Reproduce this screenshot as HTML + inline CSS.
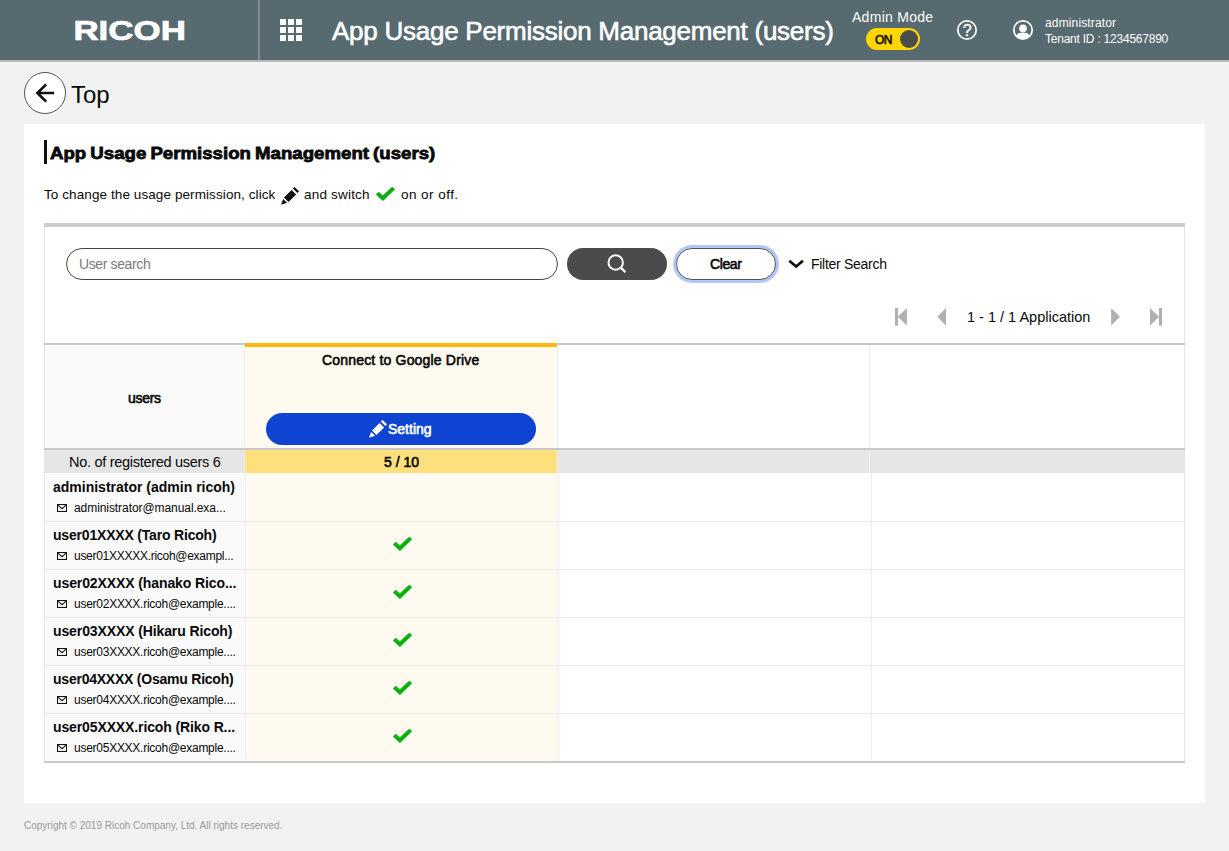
<!DOCTYPE html>
<html lang="en">
<head>
<meta charset="utf-8">
<title>App Usage Permission Management (users)</title>
<style>
*{box-sizing:border-box;margin:0;padding:0}
html,body{width:1229px;height:851px;overflow:hidden;background:#f2f2f2}
body{position:relative;font-family:"Liberation Sans",sans-serif;color:#080808;font-size:14px}
.abs{position:absolute}
.t{position:absolute;white-space:nowrap;line-height:1;transform-origin:0 50%}
.b{font-weight:bold}
.sb{font-weight:normal;-webkit-text-stroke:0.6px currentColor}
/* header */
#hdr{position:absolute;left:0;top:0;width:1229px;height:62px;background:#566a70;border-bottom:2px solid #b9b9b9;color:#fff}
#hdr .div{position:absolute;left:258px;top:0;width:2px;height:60px;background:#898989}
#grid{position:absolute;left:280px;top:19px;width:22px;height:22px}
#toggle{position:absolute;left:866px;top:28px;width:54px;height:22px;border-radius:11px;background:#ffd600}
#toggle .knob{position:absolute;left:34px;top:2px;width:18px;height:18px;border-radius:50%;background:#4b4c4e}
/* back */
#back{position:absolute;left:24px;top:72px;width:42px;height:42px;border-radius:50%;background:#fff;border:1px solid #555}
/* panel */
#panel{position:absolute;left:24px;top:124px;width:1181px;height:679px;background:#fff}
#tbar{position:absolute;left:44px;top:140px;width:3px;height:24px;background:#111}
#box{position:absolute;left:44px;top:223px;width:1141px;height:540px;border-left:1px solid #e4e4e4;border-right:1px solid #e4e4e4}
#gbar{position:absolute;left:44px;top:223px;width:1141px;height:4px;background:#cccccc}
#search{position:absolute;left:66px;top:248px;width:492px;height:32px;border:1px solid #444;border-radius:16px;background:#fff}
#sbtn{position:absolute;left:567px;top:248px;width:100px;height:32px;border-radius:16px;background:#4a4b4d}
#clear{position:absolute;left:676px;top:248px;width:100px;height:32px;border-radius:16px;background:#fff;border:1px solid #555;box-shadow:0 0 0 3px #b3c7f6}
/* table */
.hl{position:absolute;background:#c8c8c8;height:2px;left:44px;width:1141px}
.cell{position:absolute}
.vb{position:absolute;width:1px;background:#ececec}
.rb{position:absolute;left:45px;width:1139px;height:1px;background:#ececec}
#setbtn{position:absolute;left:266px;top:413px;width:270px;height:32px;border-radius:16px;background:#0f44d2}
</style>
</head>
<body>

<!-- ===== header ===== -->
<div id="hdr">
  <svg class="abs" style="left:73px;top:19px" width="114" height="22" viewBox="0 0 114 22"><text x="0.4" y="20.7" font-family="Liberation Sans, sans-serif" font-weight="bold" font-size="27.4" fill="#fff" stroke="#fff" stroke-width="0.7" textLength="112.6" lengthAdjust="spacingAndGlyphs">RICOH</text></svg>
  <div class="div"></div>
  <svg id="grid" viewBox="0 0 22 22"><g fill="#fff"><rect x="0" y="0" width="6" height="6"/><rect x="8" y="0" width="6" height="6"/><rect x="16" y="0" width="6" height="6"/><rect x="0" y="8" width="6" height="6"/><rect x="8" y="8" width="6" height="6"/><rect x="16" y="8" width="6" height="6"/><rect x="0" y="16" width="6" height="6"/><rect x="8" y="16" width="6" height="6"/><rect x="16" y="16" width="6" height="6"/></g></svg>
  <span class="t" id="htitle" style="left:332px;top:18px;font-size:26px;-webkit-text-stroke:0.6px #fff;letter-spacing:-0.255px">App Usage Permission Management (users)</span>
  <span class="t" id="admode" style="left:852px;top:10px;font-size:14px;letter-spacing:0.28px">Admin Mode</span>
  <div id="toggle"><span class="t sb" id="on" style="left:9px;top:5.5px;font-size:12px;color:#111;letter-spacing:-0.6px">ON</span><div class="knob"></div></div>
  <svg class="abs" style="left:956px;top:19px" width="22" height="22" viewBox="0 0 22 22"><circle cx="11" cy="11" r="9.2" fill="none" stroke="#fff" stroke-width="1.7"/><text x="11.2" y="17.1" text-anchor="middle" font-family="Liberation Sans, sans-serif" font-size="16" fill="#fff" stroke="#fff" stroke-width="0.35">?</text></svg>
  <svg class="abs" style="left:1012px;top:19px" width="22" height="22" viewBox="0 0 22 22"><circle cx="11" cy="11" r="9.2" fill="none" stroke="#fff" stroke-width="1.7"/><circle cx="11" cy="9.4" r="3.8" fill="#fff"/><path d="M4.47 16.9C5 14.7 7.4 13.6 11 13.6C14.6 13.6 17 14.7 17.53 16.9A8.8 8.8 0 0 1 4.47 16.9Z" fill="#fff"/></svg>
  <span class="t" id="uname" style="left:1045px;top:17px;font-size:12px;letter-spacing:0.14px">administrator</span>
  <span class="t" id="tenant" style="left:1045px;top:33px;font-size:12px;letter-spacing:-0.23px">Tenant ID : 1234567890</span>
</div>

<!-- ===== back ===== -->
<div id="back"><svg class="abs" style="left:0;top:0" width="40" height="40" viewBox="0 0 40 40"><path d="M29.2 20H12.8M21.2 11.4L12.4 20L21.2 28.6" fill="none" stroke="#111" stroke-width="2.7" stroke-linejoin="miter"/></svg></div>
<span class="t" id="top" style="left:71px;top:83px;font-size:24px">Top</span>

<!-- ===== panel ===== -->
<div id="panel"></div>
<div id="tbar"></div>
<span class="t b" id="ptitle" style="left:50px;top:145px;font-size:17px;-webkit-text-stroke:0.8px #080808;word-spacing:-1px;transform:scaleX(1.097)">App Usage Permission Management (users)</span>

<span class="t" id="d1" style="left:44px;top:188px;font-size:13.5px;letter-spacing:0.09px">To change the usage permission, click</span>
<svg class="abs" style="left:281px;top:186px" width="19" height="20" viewBox="0 0 19 20"><path d="M13.5 0.9L18.1 5.3L16.4 7L11.8 2.6ZM10.6 4L15.1 8.4L7.5 16L3 11.55ZM2.2 13L6.15 16.85L0 18.85Z" fill="#111"/></svg>
<span class="t" id="d2" style="left:304px;top:188px;font-size:13.5px;letter-spacing:0.2px">and switch</span>
<svg class="abs" style="left:375px;top:186px" width="21" height="16" viewBox="0 0 21 16"><path d="M0.9 8.4L3.7 5.7L7.8 9.6L17.2 0.8L20.1 3.3L8 15.1Z" fill="#0aad0a"/></svg>
<span class="t" id="d3" style="left:401px;top:188px;font-size:13.5px;letter-spacing:0.45px">on or off.</span>

<div id="box"></div>
<div id="gbar"></div>

<div id="search"><span class="t" id="ph" style="left:12px;top:8px;font-size:14px;color:#7a7a7a;letter-spacing:-0.38px">User search</span></div>
<div id="sbtn"><svg class="abs" style="left:38px;top:4px" width="24" height="24" viewBox="0 0 24 24"><circle cx="10.7" cy="10.5" r="7.2" fill="none" stroke="#fff" stroke-width="2"/><path d="M15.6 15.4L20.5 20.2" stroke="#fff" stroke-width="2.2"/></svg></div>
<div id="clear"><span class="t sb" id="cleart" style="left:33px;top:8px;font-size:14px;letter-spacing:-0.4px">Clear</span></div>
<svg class="abs" style="left:787px;top:257px" width="19" height="13" viewBox="0 0 19 13"><path d="M2.3 3.8L9.1 9.5L15.9 3.8" fill="none" stroke="#111" stroke-width="2.8"/></svg>
<span class="t" id="filter" style="left:811px;top:257px;font-size:14px;letter-spacing:-0.28px">Filter Search</span>

<!-- pagination -->
<svg class="abs" style="left:894px;top:307px" width="14" height="20" viewBox="0 0 14 20"><rect x="1" y="1" width="3" height="17.7" fill="#b0b0b0"/><path d="M12.9 1V18.7L3.9 9.85Z" fill="#b0b0b0"/></svg>
<svg class="abs" style="left:936px;top:307px" width="12" height="20" viewBox="0 0 12 20"><path d="M10 1V18.7L1.3 9.85Z" fill="#b0b0b0"/></svg>
<span class="t" id="pg" style="left:967px;top:310px;font-size:14.5px">1 - 1 / 1 Application</span>
<svg class="abs" style="left:1110px;top:307px" width="12" height="20" viewBox="0 0 12 20"><path d="M1.1 1V18.7L9.9 9.85Z" fill="#b0b0b0"/></svg>
<svg class="abs" style="left:1149px;top:307px" width="14" height="20" viewBox="0 0 14 20"><rect x="10" y="1" width="3" height="17.7" fill="#b0b0b0"/><path d="M1 1V18.7L10 9.85Z" fill="#b0b0b0"/></svg>

<!-- ===== table ===== -->
<div id="tbl">
  <!-- header cells -->
  <div class="cell" style="left:45px;top:345px;width:199px;height:103px;background:#fafafa"></div>
  <div class="cell" style="left:245px;top:343px;width:312px;height:105px;background:#fffaef;border-top:4px solid #fdb913"></div>
  <div class="vb" style="left:244px;top:345px;height:128px;background:#efefef"></div>
  <div class="vb" style="left:557px;top:345px;height:128px;background:#eeeef0"></div>
  <div class="vb" style="left:869px;top:345px;height:128px;background:#eeeeee"></div>
  <div class="hl" style="top:343px;width:201px"></div>
  <div class="hl" style="top:343px;left:557px;width:628px"></div>
  <span class="t sb" id="husers" style="left:128px;top:391px;font-size:14px;letter-spacing:-0.3px">users</span>
  <span class="t sb" id="hgd" style="left:322px;top:353px;font-size:14px;letter-spacing:0.18px">Connect to Google Drive</span>
  <div id="setbtn">
    <svg class="abs" style="left:103px;top:6px" width="19" height="20" viewBox="0 0 19 20"><path d="M13.5 0.9L18.1 5.3L16.4 7L11.8 2.6ZM10.6 4L15.1 8.4L7.5 16L3 11.55ZM2.2 13L6.15 16.85L0 18.85Z" fill="#fff"/></svg>
    <span class="t sb" id="sett" style="left:122px;top:9px;font-size:14px;color:#fff;letter-spacing:0px">Setting</span>
  </div>
  <!-- count row -->
  <div class="cell" style="left:45px;top:450px;width:199px;height:23px;background:#e6e6e6"></div>
  <div class="cell" style="left:245px;top:450px;width:312px;height:23px;background:#ffe07c"></div>
  <div class="cell" style="left:558px;top:450px;width:311px;height:23px;background:#e6e6e6"></div>
  <div class="cell" style="left:870px;top:450px;width:314px;height:23px;background:#e6e6e6"></div>
  <div class="hl" style="top:448px"></div>
  <span class="t" id="cnt" style="left:69px;top:455px;font-size:14.5px;letter-spacing:-0.29px">No. of registered users 6</span>
  <span class="t sb" id="c510" style="left:384px;top:455px;font-size:14px;letter-spacing:0px">5 / 10</span>

  <!-- body -->
  <div class="cell" style="left:45px;top:473px;width:200px;height:288px;background:#fafafa"></div>
  <div class="cell" style="left:246px;top:473px;width:312px;height:288px;background:#fffaef"></div>
  <div class="vb" style="left:245px;top:473px;height:288px;background:#efefef"></div>
  <div class="vb" style="left:558px;top:473px;height:288px;background:#eeeef0"></div>
  <div class="vb" style="left:871px;top:473px;height:288px;background:#eeeeee"></div>
  <div class="rb" style="top:521px"></div>
  <div class="rb" style="top:569px"></div>
  <div class="rb" style="top:617px"></div>
  <div class="rb" style="top:665px"></div>
  <div class="rb" style="top:713px"></div>
  <div class="row" id="r0">
    <span class="t b nm" id="n0" style="left:53px;top:480px;font-size:14px">administrator (admin ricoh)</span>
    <svg class="abs" style="left:57px;top:504px" width="10" height="8" viewBox="0 0 10 8"><rect x="0.5" y="0.5" width="9" height="7" fill="#fff" stroke="#111" stroke-width="1.1"/><path d="M1 1.2L5 4.7L9 1.2" fill="none" stroke="#111" stroke-width="1.1"/></svg>
    <span class="t em" id="e0" style="left:74px;top:502px;font-size:12px;letter-spacing:-0.07px">administrator@manual.exa...</span>
  </div>
  <div class="row" id="r1">
    <span class="t b nm" id="n1" style="left:53px;top:528px;font-size:14px;letter-spacing:-0.19px">user01XXXX (Taro Ricoh)</span>
    <svg class="abs" style="left:57px;top:552px" width="10" height="8" viewBox="0 0 10 8"><rect x="0.5" y="0.5" width="9" height="7" fill="#fff" stroke="#111" stroke-width="1.1"/><path d="M1 1.2L5 4.7L9 1.2" fill="none" stroke="#111" stroke-width="1.1"/></svg>
    <span class="t em" id="e1" style="left:74px;top:550px;font-size:12px;letter-spacing:-0.28px">user01XXXXX.ricoh@exampl...</span>
    <svg class="abs" style="left:392px;top:536px" width="21" height="16" viewBox="0 0 21 16"><path d="M0.9 8.4L3.7 5.7L7.8 9.6L17.2 0.8L20.1 3.3L8 15.1Z" fill="#06b006"/></svg>
  </div>
  <div class="row" id="r2">
    <span class="t b nm" id="n2" style="left:53px;top:576px;font-size:14px;letter-spacing:-0.1px">user02XXXX (hanako Rico...</span>
    <svg class="abs" style="left:57px;top:600px" width="10" height="8" viewBox="0 0 10 8"><rect x="0.5" y="0.5" width="9" height="7" fill="#fff" stroke="#111" stroke-width="1.1"/><path d="M1 1.2L5 4.7L9 1.2" fill="none" stroke="#111" stroke-width="1.1"/></svg>
    <span class="t em" id="e2" style="left:74px;top:598px;font-size:12px;letter-spacing:-0.26px">user02XXXX.ricoh@example....</span>
    <svg class="abs" style="left:392px;top:584px" width="21" height="16" viewBox="0 0 21 16"><path d="M0.9 8.4L3.7 5.7L7.8 9.6L17.2 0.8L20.1 3.3L8 15.1Z" fill="#06b006"/></svg>
  </div>
  <div class="row" id="r3">
    <span class="t b nm" id="n3" style="left:53px;top:624px;font-size:14px;letter-spacing:-0.11px">user03XXXX (Hikaru Ricoh)</span>
    <svg class="abs" style="left:57px;top:648px" width="10" height="8" viewBox="0 0 10 8"><rect x="0.5" y="0.5" width="9" height="7" fill="#fff" stroke="#111" stroke-width="1.1"/><path d="M1 1.2L5 4.7L9 1.2" fill="none" stroke="#111" stroke-width="1.1"/></svg>
    <span class="t em" id="e3" style="left:74px;top:646px;font-size:12px;letter-spacing:-0.26px">user03XXXX.ricoh@example....</span>
    <svg class="abs" style="left:392px;top:632px" width="21" height="16" viewBox="0 0 21 16"><path d="M0.9 8.4L3.7 5.7L7.8 9.6L17.2 0.8L20.1 3.3L8 15.1Z" fill="#06b006"/></svg>
  </div>
  <div class="row" id="r4">
    <span class="t b nm" id="n4" style="left:53px;top:672px;font-size:14px;letter-spacing:-0.23px">user04XXXX (Osamu Ricoh)</span>
    <svg class="abs" style="left:57px;top:696px" width="10" height="8" viewBox="0 0 10 8"><rect x="0.5" y="0.5" width="9" height="7" fill="#fff" stroke="#111" stroke-width="1.1"/><path d="M1 1.2L5 4.7L9 1.2" fill="none" stroke="#111" stroke-width="1.1"/></svg>
    <span class="t em" id="e4" style="left:74px;top:694px;font-size:12px;letter-spacing:-0.26px">user04XXXX.ricoh@example....</span>
    <svg class="abs" style="left:392px;top:680px" width="21" height="16" viewBox="0 0 21 16"><path d="M0.9 8.4L3.7 5.7L7.8 9.6L17.2 0.8L20.1 3.3L8 15.1Z" fill="#06b006"/></svg>
  </div>
  <div class="row" id="r5">
    <span class="t b nm" id="n5" style="left:53px;top:720px;font-size:14px;letter-spacing:-0.12px">user05XXXX.ricoh (Riko R...</span>
    <svg class="abs" style="left:57px;top:744px" width="10" height="8" viewBox="0 0 10 8"><rect x="0.5" y="0.5" width="9" height="7" fill="#fff" stroke="#111" stroke-width="1.1"/><path d="M1 1.2L5 4.7L9 1.2" fill="none" stroke="#111" stroke-width="1.1"/></svg>
    <span class="t em" id="e5" style="left:74px;top:742px;font-size:12px;letter-spacing:-0.26px">user05XXXX.ricoh@example....</span>
    <svg class="abs" style="left:392px;top:728px" width="21" height="16" viewBox="0 0 21 16"><path d="M0.9 8.4L3.7 5.7L7.8 9.6L17.2 0.8L20.1 3.3L8 15.1Z" fill="#06b006"/></svg>
  </div>
  <div class="hl" style="top:761px"></div>
</div>

<!-- footer -->
<span class="t" id="foot" style="left:24px;top:821px;font-size:10px;color:#999">Copyright © 2019 Ricoh Company, Ltd. All rights reserved.</span>

</body>
</html>
